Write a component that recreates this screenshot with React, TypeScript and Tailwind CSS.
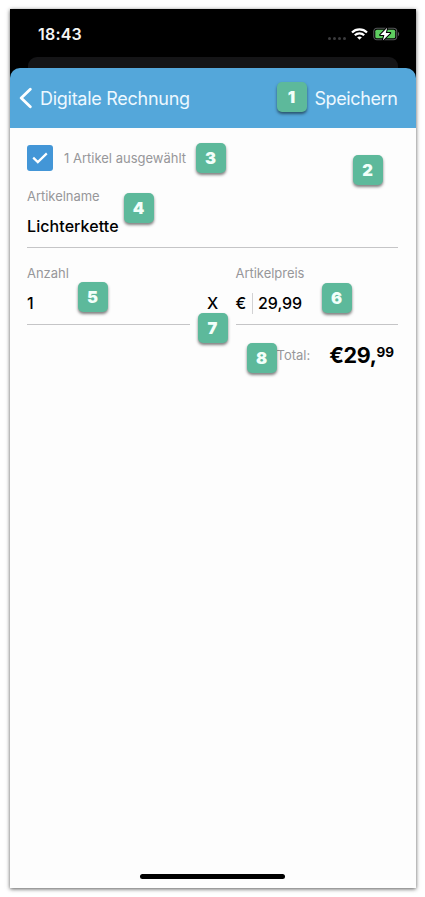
type BadgeProps = { n: number; place: string };

function Badge({ n, place }: BadgeProps) {
  return (
    <span
      className={`absolute z-10 flex h-[30px] w-[30px] items-center justify-center rounded-[5px] bg-[#5db99b] pr-px text-[16.5px] leading-[30px] font-black text-[#f2fffa] shadow-[0_2px_3px_rgba(0,0,0,0.5)] ${place}`}
    >
      {n}
    </span>
  );
}

function StatusBar() {
  return (
    <div className="relative flex h-[59px] items-start justify-between bg-black pr-[15.5px] pl-7">
      <span className="mt-[15px] text-[16px] leading-5 font-semibold tracking-[0.2px] text-[#f4f4f4]">18:43</span>
      <div className="mt-[17px] flex h-4 items-center">
        <div className="mt-2 mr-[5px] flex gap-[2px]">
          {[0, 1, 2, 3].map((i) => (
            <i key={i} className="block h-[3px] w-[3px] rounded-full bg-[#3b3b3d]" />
          ))}
        </div>
        <svg className="mr-[5px]" width="17" height="12" viewBox="0 0 17 12" fill="none" stroke="#fff" strokeWidth="2.2">
          <path d="M1 4.5C5.1.3 11.9.3 16 4.5" />
          <path d="M3.8 7.3c2.6-2.6 6.8-2.6 9.4 0" />
          <path d="M8.5 11.7 6.1 9.3c1.3-1.2 3.5-1.2 4.8 0z" fill="#fff" stroke="none" />
        </svg>
        <svg width="27" height="14" viewBox="0 0 27 14">
          <rect x="0.75" y="1.25" width="23" height="11.5" rx="3.2" fill="none" stroke="#56585a" strokeWidth="1.1" />
          <path d="M25 5v4c1.5-.4 1.5-3.6 0-4z" fill="#56585a" />
          <rect x="2.3" y="2.8" width="19.9" height="8.4" rx="1.5" fill="#5fce61" />
          <path d="M14.2.8 7.2 8h4.2L9.8 13.4 17.2 6h-4.4z" fill="#fff" stroke="#000" strokeWidth="2" strokeLinejoin="round" paintOrder="stroke" />
        </svg>
      </div>
      <div className="absolute inset-x-[18px] bottom-0 h-[11px] rounded-t-[9px] bg-[#151517]" />
    </div>
  );
}

export default function App() {
  return (
    <div className="h-[897px] w-[425px] bg-white pt-[9px] pl-[10px] font-['Inter',sans-serif]">
      <main className="relative flex h-[879px] w-[405.5px] flex-col bg-[#fdfdfd] shadow-[0_1px_4px_rgba(0,0,0,0.65)]">
        <StatusBar />
        <div className="bg-black">
          <header className="flex h-[60px] items-center rounded-t-[10px] bg-[#54a7da] pr-[18px] pl-[9px] text-[18px] text-[#edf8ff]">
            <svg width="13" height="22" viewBox="0 0 13 22" fill="none" stroke="#fff" strokeWidth="2.8" strokeLinecap="round" strokeLinejoin="round">
              <path d="M11.3 2.2 2.2 11l9.1 8.8" />
            </svg>
            <h1 className="ml-2 tracking-[-0.27px]">Digitale Rechnung</h1>
            <span className="ml-auto tracking-[-0.38px]">Speichern</span>
          </header>
        </div>

        <section className="flex flex-col pr-[18px] pl-[17px]">
          <div className="mt-[17px] flex h-[26px] items-center">
            <span className="flex h-[26px] w-[26px] items-center justify-center rounded-[3px] bg-[#4396d7]">
              <svg width="16" height="12" viewBox="0 0 16 12" fill="none" stroke="#fff" strokeWidth="2.2">
                <path d="m1.2 5.6 4.6 4.5 9-8.7" />
              </svg>
            </span>
            <span className="mt-[2px] ml-[11px] text-[13px] text-[#97979a]">1 Artikel ausgewählt</span>
          </div>

          <div className="flex h-[77px] flex-col border-b border-[#c5c5c7] pt-[16px]">
            <label className="text-[13px] leading-[18px] tracking-[-0.03px] text-[#97979a]">Artikelname</label>
            <span className="mt-[11px] text-[16px] leading-5 font-medium tracking-[0.08px] text-black">Lichterkette</span>
          </div>

          <div className="flex h-[77px]">
            <div className="flex w-[163px] flex-col border-b border-[#c5c5c7] pt-[16px]">
              <label className="text-[13px] leading-[18px] tracking-[-0.03px] text-[#97979a]">Anzahl</label>
              <span className="mt-[11px] text-[16px] leading-5 font-medium text-black">1</span>
            </div>
            <span className="w-[45px] pt-[45px] text-center text-[16px] leading-5 font-medium">X</span>
            <div className="ml-[0.5px] flex flex-1 flex-col border-b border-[#c5c5c7] pt-[16px]">
              <label className="text-[13px] leading-[18px] tracking-[-0.03px] text-[#97979a]">Artikelpreis</label>
              <div className="mt-[11px] flex h-5 items-center text-[16px] font-medium text-black">
                <span className="w-4">€</span>
                <i className="mr-[5.5px] h-[21px] w-px bg-[#d2d2d4]" />
                <span className="tracking-[-0.05px]">29,99</span>
              </div>
            </div>
          </div>

          <div className="mt-[16px] flex h-7 items-center justify-end pr-[3.5px]">
            <span className="mt-px mr-[19px] text-[13px] text-[#97979a]">Total:</span>
            <span className="flex text-[21.5px] leading-7 font-bold tracking-[-0.4px] text-black">
              €29,<span className="text-[13.5px] leading-[23px] tracking-[0px]">99</span>
            </span>
          </div>
        </section>

        <div className="mt-auto mb-[9px] ml-[130px] h-[5.5px] w-[145px] rounded-full bg-black" />

        <Badge n={1} place="top-[73px] left-[267px]" />
        <Badge n={2} place="top-[146px] left-[343px]" />
        <Badge n={3} place="top-[134px] left-[186px]" />
        <Badge n={4} place="top-[184px] left-[114px]" />
        <Badge n={5} place="top-[273px] left-[68px]" />
        <Badge n={6} place="top-[274px] left-[312px]" />
        <Badge n={7} place="top-[304px] left-[188px]" />
        <Badge n={8} place="top-[334px] left-[237px]" />
      </main>
    </div>
  );
}
